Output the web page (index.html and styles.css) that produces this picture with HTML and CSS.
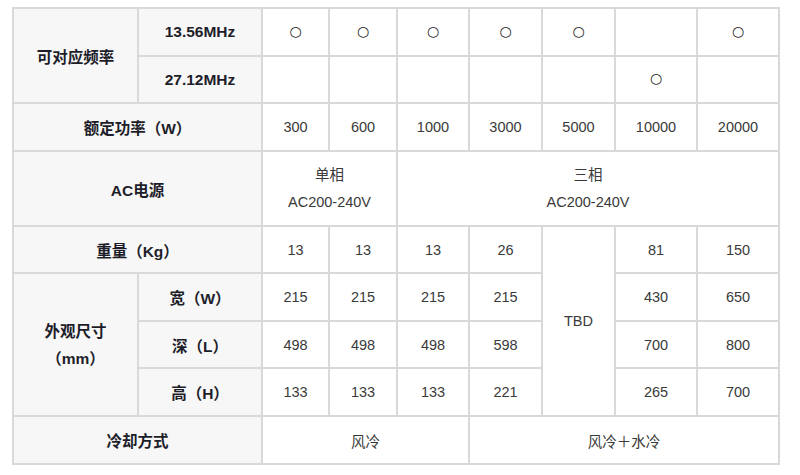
FILE: index.html
```html
<!DOCTYPE html>
<html lang="zh">
<head>
<meta charset="utf-8">
<title>规格表</title>
<link rel="stylesheet" href="styles.css">
</head>
<body>
<table class="spec">
  <colgroup>
    <col class="c-h1"><col class="c-h2">
    <col class="c-a"><col class="c-b"><col class="c-c"><col class="c-d"><col class="c-e"><col class="c-f"><col class="c-g">
  </colgroup>
  <tr class="r48">
    <th rowspan="2">可对应频率</th>
    <th>13.56MHz</th>
    <td><span class="dot">○</span></td><td><span class="dot">○</span></td><td><span class="dot">○</span></td><td><span class="dot">○</span></td><td><span class="dot">○</span></td><td></td><td><span class="dot">○</span></td>
  </tr>
  <tr class="r47">
    <th>27.12MHz</th>
    <td></td><td></td><td></td><td></td><td></td><td><span class="dot">○</span></td><td></td>
  </tr>
  <tr class="r48">
    <th colspan="2">额定功率（W）</th>
    <td>300</td><td>600</td><td>1000</td><td>3000</td><td>5000</td><td>10000</td><td>20000</td>
  </tr>
  <tr class="r75">
    <th colspan="2">AC电源</th>
    <td colspan="2" class="two">单相<br>AC200-240V</td>
    <td colspan="5" class="two">三相<br>AC200-240V</td>
  </tr>
  <tr class="r47">
    <th colspan="2">重量（Kg）</th>
    <td>13</td><td>13</td><td>13</td><td>26</td>
    <td rowspan="4">TBD</td>
    <td>81</td><td>150</td>
  </tr>
  <tr class="r48">
    <th rowspan="3" class="two">外观尺寸<br>（mm）</th>
    <th>宽（W）</th>
    <td>215</td><td>215</td><td>215</td><td>215</td><td>430</td><td>650</td>
  </tr>
  <tr class="r47">
    <th>深（L）</th>
    <td>498</td><td>498</td><td>498</td><td>598</td><td>700</td><td>800</td>
  </tr>
  <tr class="r48">
    <th>高（H）</th>
    <td>133</td><td>133</td><td>133</td><td>221</td><td>265</td><td>700</td>
  </tr>
  <tr class="r48">
    <th colspan="2">冷却方式</th>
    <td colspan="3">风冷</td>
    <td colspan="4">风冷＋水冷</td>
  </tr>
</table>
</body>
</html>
```
FILE: styles.css
```css
html, body {
  margin: 0;
  padding: 0;
  background: #ffffff;
}
body {
  padding: 7px 0 0 12px;
  font-family: "Liberation Sans", "Noto Sans CJK SC", sans-serif;
}
.spec {
  border-collapse: collapse;
  table-layout: fixed;
  width: 766px;
}
.c-h1 { width: 125px; }
.c-h2 { width: 124px; }
.c-a { width: 67px; }
.c-b { width: 68px; }
.c-c { width: 72px; }
.c-d { width: 73px; }
.c-e { width: 73px; }
.c-f { width: 82px; }
.c-g { width: 82px; }
.spec th,
.spec td {
  border: 2px solid #d9d9d9;
  padding: 0;
  text-align: center;
  vertical-align: middle;
}
.spec th {
  background: #f7f7f7;
  color: #1e1e2a;
  font-size: 15.5px;
  font-weight: bold;
}
.spec td {
  background: #ffffff;
  color: #3a3a3a;
  font-size: 14.5px;
  font-weight: normal;
}
.spec .two {
  line-height: 27px;
}
.dot {
  font-family: "DejaVu Sans", sans-serif;
  font-size: 14px;
  color: #222;
  vertical-align: 3px;
}
.r48 { height: 48px; }
.r47 { height: 47px; }
.r75 { height: 75px; }
```
